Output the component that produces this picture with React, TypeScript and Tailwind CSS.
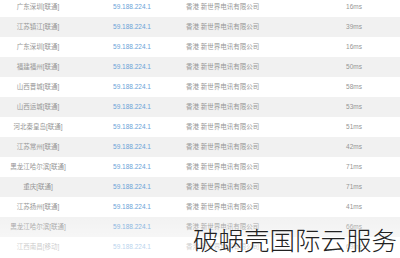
import React from 'react';

const rows = [
  { city: '广东深圳[联通]', ms: '16ms' },
  { city: '江苏镇江[联通]', ms: '39ms' },
  { city: '广东深圳[联通]', ms: '16ms' },
  { city: '福建福州[联通]', ms: '50ms' },
  { city: '山西晋城[联通]', ms: '58ms' },
  { city: '山西运城[联通]', ms: '53ms' },
  { city: '河北秦皇岛[联通]', ms: '51ms' },
  { city: '江苏常州[联通]', ms: '42ms' },
  { city: '黑龙江哈尔滨[联通]', ms: '71ms' },
  { city: '重庆[联通]', ms: '71ms' },
  { city: '江苏扬州[联通]', ms: '41ms' },
  { city: '黑龙江哈尔滨[联通]', ms: '66ms' },
  { city: '江西南昌[移动]', ms: '69ms' },
];

export default function App() {
  return (
    <div
      className="relative w-[400px] h-[258px] overflow-hidden bg-white"
      style={{ fontFamily: '"Liberation Sans", "Noto Sans CJK SC", sans-serif' }}
    >
      {/* ping table */}
      <div className="flex flex-col mt-[-3px]">
        {rows.map((r, i) => (
          <div
            key={i}
            className={`flex items-center h-[20px] text-[6.5px] text-[#969696] ${i % 2 === 1 ? 'bg-[#f1f1f1]' : 'bg-white'}`}
          >
            <div className="w-[76px] text-center whitespace-nowrap">{r.city}</div>
            <div className="w-[112px] text-center text-[#6aa3d8]">59.188.224.1</div>
            <div className="w-[120px] whitespace-nowrap -ml-[2px]">香港 新世界电讯有限公司</div>
            <div className="flex-1 text-right pr-[38px]">{r.ms}</div>
          </div>
        ))}
      </div>

      {/* bottom fade */}
      <div className="absolute left-0 right-0 top-[212px] bottom-0 bg-gradient-to-b from-white/0 to-white/70 pointer-events-none" />

      {/* watermark */}
      <div
        className="absolute left-[193px] top-[226px] text-[25.5px] leading-none text-[#222] font-light whitespace-nowrap"
        style={{ fontFamily: '"Noto Sans CJK SC", sans-serif', textShadow: '0 0 2px #fff' }}
      >
        破蜗壳国际云服务
      </div>
    </div>
  );
}
